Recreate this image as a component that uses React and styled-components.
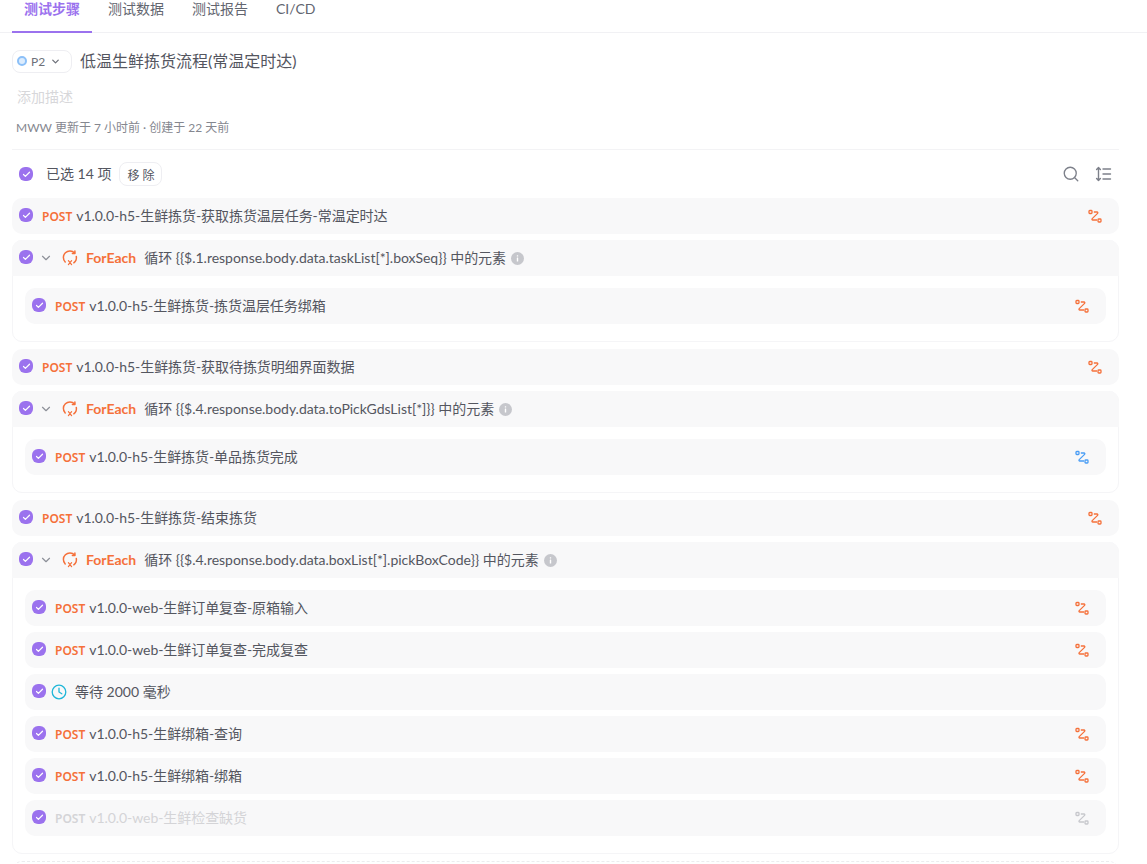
import React from "react";
import styled, { createGlobalStyle } from "styled-components";
import { ChevronDown, Search, Check } from "lucide-react";

const Global = createGlobalStyle`
  html, body { margin: 0; padding: 0; background: #fff; overflow: hidden; }
  body { font-family: Lato, "Noto Sans CJK SC", sans-serif; font-size: 14px; color: #4a4d57; }
`;

const Page = styled.div`
  width: 1147px;
  height: 864px;
  overflow: hidden;
`;
const Tabs = styled.div`
  display: flex;
  gap: 4px;
  height: 32px;
  padding-left: 12px;
  border-bottom: 1px solid #f1f1f4;
`;
const Tab = styled.div`
  width: ${p => p.$w}px;
  height: 33px;
  box-sizing: border-box;
  padding: 0 12px;
  line-height: 17px;
  font-size: 14px;
  white-space: nowrap;
  font-weight: ${p => (p.$active ? 600 : 400)};
  color: ${p => (p.$active ? "#9b72ee" : "#62656f")};
  border-bottom: ${p => (p.$active ? "2px solid #9b72ee" : "none")};
`;
const Content = styled.div`
  width: 1107px;
  padding: 16px 0 0 12px;
`;
const TitleRow = styled.div`
  display: flex;
  align-items: center;
  gap: 8px;
  height: 24px;
`;
const Priority = styled.div`
  display: flex;
  align-items: center;
  width: 60px;
  height: 23px;
  box-sizing: border-box;
  padding-left: 4px;
  border: 1px solid #eeeef2;
  border-radius: 8px;
  font-size: 12px;
  color: #6d7079;
`;
const Dot = styled.span`
  width: 6px;
  height: 6px;
  border: 2px solid #8cc0f8;
  background: #dcecfd;
  border-radius: 50%;
  margin-right: 4px;
`;
const Title = styled.div`
  font-size: 16px;
  padding-bottom: 2px;
  color: #54565f;
`;
const Description = styled.div`
  margin: 14px 0 0 5px;
  line-height: 20px;
  font-size: 14px;
  color: #d7d7da;
`;
const Meta = styled.div`
  margin: 11px 0 0 4px;
  line-height: 20px;
  font-size: 12px;
  color: #85878f;
`;
const Toolbar = styled.div`
  display: flex;
  align-items: center;
  height: 49px;
  margin-top: 11px;
  box-sizing: border-box;
  padding: 0 7px;
  border-top: 1px solid #f3f3f5;
`;
const Selected = styled.span`
  margin-left: 13px;
  padding-bottom: 2px;
  font-size: 14px;
  color: #54565f;
`;
const RemoveBtn = styled.button`
  margin-left: 8px;
  width: 43px;
  height: 24px;
  padding: 0;
  background: #fff;
  border: 1px solid #eeeef2;
  border-radius: 8px;
  font: inherit;
  font-size: 12px;
  color: #54565f;
`;
const ToolIcons = styled.div`
  margin-left: auto;
  display: flex;
  align-items: center;
  gap: 14px;
  color: #7d808a;
`;
const List = styled.div`
  display: flex;
  flex-direction: column;
  gap: 6px;
`;
const Row = styled.div`
  display: flex;
  align-items: center;
  height: 36px;
  padding: 0 17px 0 7px;
  background: #f8f8f9;
  border-radius: 10px;
  color: ${p => (p.$dim ? "#d4d4d7" : "#54565f")};
`;
const RowLabel = styled.span`
  margin-left: 9px;
  padding-bottom: 2px;
  white-space: nowrap;
  font-size: 14px;
  letter-spacing: -0.06px;
`;
const Method = styled.b`
  font-family: "Noto Sans", sans-serif;
  font-weight: 600;
  font-size: 12px;
  letter-spacing: 0;
  margin-right: 4px;
  color: ${p => (p.$dim ? "#d4d4d7" : "#f5703a")};
`;
const RouteWrap = styled.span`
  margin-left: auto;
  display: flex;
`;
const Group = styled.div`
  border: 1px solid #f5f5f7;
  border-radius: 10px;
  box-sizing: border-box;
  padding-bottom: 17px;
  margin-bottom: 1px;
`;
const GroupHead = styled.div`
  display: flex;
  align-items: center;
  height: 36px;
  margin: -1px -1px 0;
  padding-left: 7px;
  background: #f8f8f9;
  border-radius: 10px 10px 0 0;
  color: #54565f;
  white-space: nowrap;
`;
const Caret = styled.span`
  display: flex;
  margin-left: 6px;
  color: #8d9099;
`;
const LoopWrap = styled.span`
  display: flex;
  margin-left: 9px;
`;
const ForEach = styled.b`
  margin-left: 8px;
  padding-bottom: 2px;
  font-weight: 700;
  font-size: 14px;
  color: #f5703a;
`;
const LoopText = styled.span`
  margin-left: 8px;
  padding-bottom: 2px;
  font-size: 14px;
  letter-spacing: -0.02px;
`;
const InfoWrap = styled.span`
  display: flex;
  margin-left: 5px;
`;
const Children = styled.div`
  display: flex;
  flex-direction: column;
  gap: 6px;
  padding: 12px 12px 0;
`;
const CheckBox = styled.span`
  flex: none;
  display: flex;
  align-items: center;
  justify-content: center;
  position: relative;
  top: ${p => (p.$flat ? 0 : -1)}px;
  width: 14px;
  height: 14px;
  border-radius: 6px;
  background: #9b72ee;
  color: #fff;
`;
const ClockWrap = styled.span`
  display: flex;
  margin-left: 5px;
`;
const WaitText = styled.span`
  margin-left: 8px;
  padding-bottom: 2px;
  font-size: 14px;
`;
const AddStep = styled.div`
  height: 36px;
  flex: none;
  box-sizing: border-box;
  border: 1px dashed #ececef;
  border-radius: 10px;
`;

const Tick = ({ flat }) => (
  <CheckBox $flat={flat}>
    <Check size={9} strokeWidth={3.2} />
  </CheckBox>
);

const RouteIcon = ({ color = "#f5703a" }) => (
  <RouteWrap>
    <svg width="14" height="14" viewBox="0 0 14 14" fill="none" stroke={color} strokeWidth="1.3">
      <rect x="1" y="1.5" width="3" height="3" rx=".8" />
      <rect x="10" y="10" width="3" height="3" rx=".8" />
      <path d="M5.8 3H9c.8 0 1.1.9.6 1.4L4.2 9.6c-.5.5-.2 1.4.6 1.4H9" />
    </svg>
  </RouteWrap>
);

const LoopIcon = () => (
  <LoopWrap>
    <svg width="16" height="16" viewBox="0 0 16 16" fill="none" stroke="#f5703a" strokeWidth="1.5" strokeLinecap="round" strokeLinejoin="round">
      <path d="M3.2 12A6.4 6.4 0 0 1 12.6 3" />
      <path d="M12.9 0.9v2.5h-2.5" />
      <path d="M14.3 6.4a6.4 6.4 0 0 1-2.5 6.4" />
      <path d="M6.4 10.6 9.6 14.6M9.6 10.6 6.4 14.6" strokeWidth="1.2" />
    </svg>
  </LoopWrap>
);

const SortIcon = () => (
  <svg width="18" height="18" viewBox="0 0 18 18" fill="none" stroke="#7d808a" strokeWidth="1.4" strokeLinecap="round" strokeLinejoin="round">
    <path d="M4.5 2.5v13M2.6 4.4l1.9-1.9 1.9 1.9M2.6 13.6l1.9 1.9 1.9-1.9" />
    <path d="M9 4h7.5M9 9h7.5M9 14h7.5" />
  </svg>
);

const ClockIcon = () => (
  <ClockWrap>
    <svg width="16" height="16" viewBox="0 0 16 16" fill="none" stroke="#1fb6d8" strokeWidth="1.3" strokeLinecap="round">
      <circle cx="8" cy="8" r="6.8" />
      <path d="M8 4.2V8l2.8 1.8" />
    </svg>
  </ClockWrap>
);

const InfoIcon = () => (
  <InfoWrap>
    <svg width="13" height="13" viewBox="0 0 13 13">
      <circle cx="6.5" cy="6.5" r="6.5" fill="#c6c7cc" />
      <rect x="5.8" y="5.6" width="1.4" height="4" rx=".4" fill="#fff" />
      <rect x="5.8" y="3.2" width="1.4" height="1.4" rx=".4" fill="#fff" />
    </svg>
  </InfoWrap>
);

const Api = ({ name, dim, route }) => (
  <Row $dim={dim}>
    <Tick />
    <RowLabel>
      <Method $dim={dim}>POST</Method>
      {name}
    </RowLabel>
    <RouteIcon color={route} />
  </Row>
);

const Loop = ({ expr, children }) => (
  <Group>
    <GroupHead>
      <Tick />
      <Caret>
        <ChevronDown size={14} />
      </Caret>
      <LoopIcon />
      <ForEach>ForEach</ForEach>
      <LoopText>循环 {expr} 中的元素</LoopText>
      <InfoIcon />
    </GroupHead>
    <Children>{children}</Children>
  </Group>
);

export default function App() {
  return (
    <Page>
      <Global />
      <Tabs>
        <Tab $active $w={80}>测试步骤</Tab>
        <Tab $w={80}>测试数据</Tab>
        <Tab $w={80}>测试报告</Tab>
        <Tab $w={60}>CI/CD</Tab>
      </Tabs>
      <Content>
        <TitleRow>
          <Priority>
            <Dot />
            P2
            <ChevronDown size={11} strokeWidth={2.8} style={{ marginLeft: 5 }} />
          </Priority>
          <Title>低温生鲜拣货流程(常温定时达)</Title>
        </TitleRow>
        <Description>添加描述</Description>
        <Meta>MWW 更新于 7 小时前 · 创建于 22 天前</Meta>
        <Toolbar>
          <Tick flat />
          <Selected>已选 14 项</Selected>
          <RemoveBtn>移 除</RemoveBtn>
          <ToolIcons>
            <Search size={18} strokeWidth={1.8} />
            <SortIcon />
          </ToolIcons>
        </Toolbar>
        <List>
          <Api name="v1.0.0-h5-生鲜拣货-获取拣货温层任务-常温定时达" />
          <Loop expr="{{$.1.response.body.data.taskList[*].boxSeq}}">
            <Api name="v1.0.0-h5-生鲜拣货-拣货温层任务绑箱" />
          </Loop>
          <Api name="v1.0.0-h5-生鲜拣货-获取待拣货明细界面数据" />
          <Loop expr="{{$.4.response.body.data.toPickGdsList[*]}}">
            <Api name="v1.0.0-h5-生鲜拣货-单品拣货完成" route="#4a9df5" />
          </Loop>
          <Api name="v1.0.0-h5-生鲜拣货-结束拣货" />
          <Loop expr="{{$.4.response.body.data.boxList[*].pickBoxCode}}">
            <Api name="v1.0.0-web-生鲜订单复查-原箱输入" />
            <Api name="v1.0.0-web-生鲜订单复查-完成复查" />
            <Row>
              <Tick />
              <ClockIcon />
              <WaitText>等待 2000 毫秒</WaitText>
            </Row>
            <Api name="v1.0.0-h5-生鲜绑箱-查询" />
            <Api name="v1.0.0-h5-生鲜绑箱-绑箱" />
            <Api name="v1.0.0-web-生鲜检查缺货" dim route="#c6c7cc" />
          </Loop>
          <AddStep />
        </List>
      </Content>
    </Page>
  );
}
